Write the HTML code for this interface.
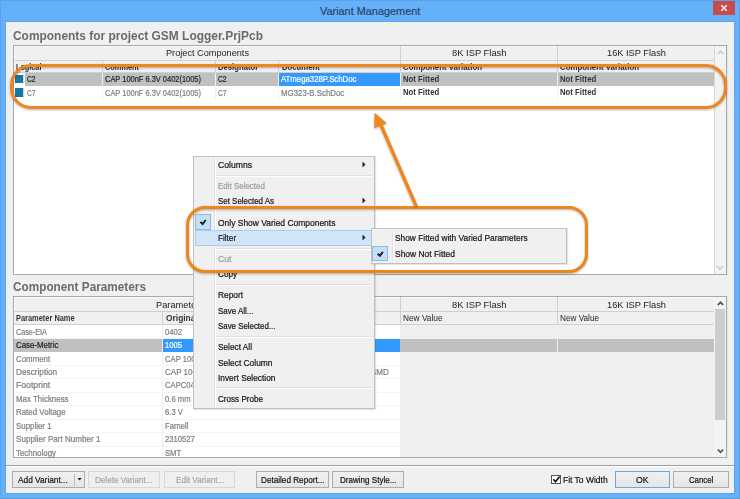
<!DOCTYPE html><html><head><meta charset="utf-8"><style>
*{margin:0;padding:0;box-sizing:border-box}
html,body{width:740px;height:499px;overflow:hidden;background:#64b1fa;font-family:"Liberation Sans",sans-serif}
div{position:absolute}
svg{position:absolute}
.t{white-space:nowrap;line-height:1;transform-origin:0 0}
</style></head><body><div style="left:0px;top:0px;width:740px;height:499px;background:#64b1fa"></div>
<div style="left:0px;top:0px;width:740px;height:1px;background:#5aa3e8"></div>
<div style="left:0px;top:0px;width:1px;height:499px;background:#5aa3e8"></div>
<div style="left:739px;top:0px;width:1px;height:499px;background:#5aa3e8"></div>
<div style="left:0px;top:498px;width:740px;height:1px;background:#5aa3e8"></div>
<div class="t" style="left:320px;top:5.87px;font-size:10.9px;color:#2b4466;font-weight:400;-webkit-text-stroke:0.2px #2b4466;">Variant Management</div>
<div style="left:713px;top:1px;width:22px;height:14px;background:#c94c4c"></div>
<svg style="left:713px;top:1px" width="22" height="14" viewBox="0 0 22 14"><path d="M8.3 4.3 L13.7 9.7 M13.7 4.3 L8.3 9.7" stroke="#fff" stroke-width="1.4"/></svg>
<div style="left:5px;top:21px;width:730px;height:473px;background:#5da6ee"></div>
<div style="left:6px;top:22px;width:728px;height:471px;background:#f0f0f0"></div>
<div class="t" style="left:13px;top:29.54px;font-size:12px;color:#6b6b6b;font-weight:700;transform:scaleX(0.9946);">Components for project GSM Logger.PrjPcb</div>
<div style="left:12.5px;top:44.5px;width:715px;height:230.5px;background:#e6e6e6"></div>
<div style="left:13px;top:45px;width:714px;height:229.5px;background:#fff;border:1px solid #a9a9a9"></div>
<div style="left:14px;top:46px;width:700px;height:15px;background:#f0f0f0;border-bottom:1px solid #d0d0d0;border-top:1px solid #fafafa;border-left:1px solid #fafafa"></div>
<div style="left:14px;top:61px;width:700px;height:12px;background:#f0f0f0;border-bottom:1px solid #d0d0d0"></div>
<div style="left:400px;top:46px;width:1px;height:27px;background:#d0d0d0"></div>
<div style="left:557px;top:46px;width:1px;height:27px;background:#d0d0d0"></div>
<div style="left:102px;top:61px;width:1px;height:12px;background:#d0d0d0"></div>
<div style="left:215.3px;top:61px;width:1px;height:12px;background:#d0d0d0"></div>
<div style="left:278.3px;top:61px;width:1px;height:12px;background:#d0d0d0"></div>
<div class="t" style="left:166px;top:48.58px;font-size:9px;color:#222;font-weight:400;transform:scaleX(1.0179);">Project Components</div>
<div class="t" style="left:451.5px;top:48.58px;font-size:9px;color:#222;font-weight:400;transform:scaleX(1.0408);">8K ISP Flash</div>
<div class="t" style="left:607px;top:48.58px;font-size:9px;color:#222;font-weight:400;transform:scaleX(1.0284);">16K ISP Flash</div>
<div class="t" style="left:15.9px;top:63.20px;font-size:8.5px;color:#333;font-weight:700;transform:scaleX(0.8536);">Logical</div>
<div class="t" style="left:104.9px;top:63.20px;font-size:8.5px;color:#333;font-weight:700;transform:scaleX(0.8674);">Comment</div>
<div class="t" style="left:218.2px;top:63.20px;font-size:8.5px;color:#333;font-weight:700;transform:scaleX(0.9054);">Designator</div>
<div class="t" style="left:281.5px;top:63.20px;font-size:8.5px;color:#333;font-weight:700;transform:scaleX(0.9071);">Document</div>
<div class="t" style="left:403px;top:63.20px;font-size:8.5px;color:#333;font-weight:700;transform:scaleX(0.9242);">Component Variation</div>
<div class="t" style="left:560px;top:63.20px;font-size:8.5px;color:#333;font-weight:700;transform:scaleX(0.9242);">Component Variation</div>
<div style="left:25px;top:73px;width:689px;height:13px;background:#c0c0c0"></div>
<div style="left:279px;top:73px;width:121px;height:13px;background:#3399ff"></div>
<div style="left:15.4px;top:74.6px;width:7.6px;height:8.8px;background:#1678a0"></div>
<div style="left:22.8px;top:74.6px;width:1.2px;height:8.8px;background:repeating-linear-gradient(#7fd8e8 0 1px,#e8f8fb 1px 2px)"></div>
<div style="left:14.6px;top:74.6px;width:0.8px;height:8.8px;background:repeating-linear-gradient(#7fd8e8 0 1px,#e8f8fb 1px 2px)"></div>
<div style="left:15.4px;top:88.1px;width:7.6px;height:8.8px;background:#1678a0"></div>
<div style="left:22.8px;top:88.1px;width:1.2px;height:8.8px;background:repeating-linear-gradient(#7fd8e8 0 1px,#e8f8fb 1px 2px)"></div>
<div style="left:14.6px;top:88.1px;width:0.8px;height:8.8px;background:repeating-linear-gradient(#7fd8e8 0 1px,#e8f8fb 1px 2px)"></div>
<div class="t" style="left:26.9px;top:75.30px;font-size:8.5px;color:#1e1e1e;font-weight:400;transform:scaleX(0.7915);-webkit-text-stroke:0.2px #1e1e1e;">C2</div>
<div class="t" style="left:26.9px;top:88.70px;font-size:8.5px;color:#7d7d7d;font-weight:400;transform:scaleX(0.7915);-webkit-text-stroke:0.2px #7d7d7d;">C7</div>
<div class="t" style="left:104.5px;top:75.30px;font-size:8.5px;color:#1e1e1e;font-weight:400;transform:scaleX(0.8769);-webkit-text-stroke:0.2px #1e1e1e;">CAP 100nF 6.3V 0402(1005)</div>
<div class="t" style="left:104.5px;top:88.70px;font-size:8.5px;color:#7d7d7d;font-weight:400;transform:scaleX(0.8769);-webkit-text-stroke:0.2px #7d7d7d;">CAP 100nF 6.3V 0402(1005)</div>
<div class="t" style="left:218.2px;top:75.30px;font-size:8.5px;color:#1e1e1e;font-weight:400;transform:scaleX(0.7915);-webkit-text-stroke:0.2px #1e1e1e;">C2</div>
<div class="t" style="left:218.2px;top:88.70px;font-size:8.5px;color:#7d7d7d;font-weight:400;transform:scaleX(0.7915);-webkit-text-stroke:0.2px #7d7d7d;">C7</div>
<div class="t" style="left:280.5px;top:75.30px;font-size:8.5px;color:#fff;font-weight:400;transform:scaleX(0.9153);-webkit-text-stroke:0.2px #fff;">ATmega328P.SchDoc</div>
<div class="t" style="left:280.5px;top:88.70px;font-size:8.5px;color:#7d7d7d;font-weight:400;transform:scaleX(0.9241);-webkit-text-stroke:0.2px #7d7d7d;">MG323-B.SchDoc</div>
<div class="t" style="left:403px;top:74.60px;font-size:8.5px;color:#333;font-weight:700;transform:scaleX(0.9128);">Not Fitted</div>
<div class="t" style="left:403px;top:88.00px;font-size:8.5px;color:#333;font-weight:700;transform:scaleX(0.9128);">Not Fitted</div>
<div class="t" style="left:559.6px;top:74.60px;font-size:8.5px;color:#333;font-weight:700;transform:scaleX(0.9128);">Not Fitted</div>
<div class="t" style="left:559.6px;top:88.00px;font-size:8.5px;color:#333;font-weight:700;transform:scaleX(0.9128);">Not Fitted</div>
<div style="left:102px;top:73px;width:1px;height:26.5px;background:#f2f2f2"></div>
<div style="left:215.3px;top:73px;width:1px;height:26.5px;background:#f2f2f2"></div>
<div style="left:278.3px;top:73px;width:1px;height:26.5px;background:#f2f2f2"></div>
<div style="left:400px;top:73px;width:1px;height:26.5px;background:#f2f2f2"></div>
<div style="left:557px;top:73px;width:1px;height:26.5px;background:#f2f2f2"></div>
<div style="left:714px;top:46px;width:12px;height:227.5px;background:#f3f3f3;border-left:1px solid #d8d8d8"></div>
<svg style="left:714px;top:46px" width="12" height="14"><path d="M3.8 8 L6.5 5.3 L9.2 8" stroke="#c4c4c4" stroke-width="1.4" fill="none"/></svg>
<svg style="left:714px;top:261px" width="12" height="12"><path d="M3 5 L6 8 L9 5" stroke="#c8c8c8" stroke-width="1.3" fill="none"/></svg>
<div class="t" style="left:13px;top:281.04px;font-size:12px;color:#6b6b6b;font-weight:700;transform:scaleX(0.9825);">Component Parameters</div>
<div style="left:12.5px;top:295.5px;width:715px;height:162.5px;background:#e6e6e6"></div>
<div style="left:13px;top:296px;width:714px;height:161.5px;background:#f0f0f0;border:1px solid #a9a9a9"></div>
<div style="left:14px;top:297px;width:700px;height:15px;background:#f0f0f0;border-bottom:1px solid #d0d0d0;border-top:1px solid #fafafa;border-left:1px solid #fafafa"></div>
<div style="left:14px;top:312px;width:700px;height:13px;background:#f0f0f0;border-bottom:1px solid #d0d0d0"></div>
<div style="left:400px;top:297px;width:1px;height:28px;background:#d0d0d0"></div>
<div style="left:557px;top:297px;width:1px;height:28px;background:#d0d0d0"></div>
<div style="left:162px;top:312px;width:1px;height:13px;background:#d0d0d0"></div>
<div class="t" style="left:155.7px;top:300.58px;font-size:9px;color:#222;font-weight:400;transform:scaleX(1.0319);">Parameters</div>
<div class="t" style="left:451.5px;top:300.58px;font-size:9px;color:#222;font-weight:400;transform:scaleX(1.0408);">8K ISP Flash</div>
<div class="t" style="left:607px;top:300.58px;font-size:9px;color:#222;font-weight:400;transform:scaleX(1.0284);">16K ISP Flash</div>
<div class="t" style="left:15.7px;top:314.10px;font-size:8.5px;color:#333;font-weight:700;transform:scaleX(0.8734);">Parameter Name</div>
<div class="t" style="left:165.5px;top:314.10px;font-size:8.5px;color:#333;font-weight:700;transform:scaleX(0.9879);">Original Value</div>
<div class="t" style="left:403px;top:314.10px;font-size:8.5px;color:#222;font-weight:400;transform:scaleX(0.9759);">New Value</div>
<div class="t" style="left:560px;top:314.10px;font-size:8.5px;color:#222;font-weight:400;transform:scaleX(0.9635);">New Value</div>
<div style="left:14px;top:325px;width:386px;height:131.5px;background:#fff"></div>
<div style="left:14px;top:337.95px;width:386px;height:1px;background:#f4f4f4"></div>
<div class="t" style="left:15.5px;top:327.60px;font-size:8.5px;color:#7d7d7d;font-weight:400;transform:scaleX(0.8495);-webkit-text-stroke:0.2px #7d7d7d;">Case-EIA</div>
<div class="t" style="left:164.9px;top:327.60px;font-size:8.5px;color:#7d7d7d;font-weight:400;transform:scaleX(0.9000);-webkit-text-stroke:0.2px #7d7d7d;">0402</div>
<div style="left:14px;top:338.84999999999997px;width:148px;height:12.85px;background:#c0c0c0"></div>
<div style="left:163px;top:338.84999999999997px;width:237px;height:12.85px;background:#3399ff"></div>
<div style="left:400px;top:338.84999999999997px;width:157px;height:12.85px;background:#c0c0c0"></div>
<div style="left:558px;top:338.84999999999997px;width:156px;height:12.85px;background:#c0c0c0"></div>
<div class="t" style="left:15.5px;top:341.05px;font-size:8.5px;color:#1e1e1e;font-weight:400;transform:scaleX(0.9255);-webkit-text-stroke:0.2px #1e1e1e;">Case-Metric</div>
<div class="t" style="left:164.9px;top:341.05px;font-size:8.5px;color:#fff;font-weight:400;transform:scaleX(0.9000);-webkit-text-stroke:0.2px #fff;">1005</div>
<div style="left:14px;top:364.84999999999997px;width:386px;height:1px;background:#f4f4f4"></div>
<div class="t" style="left:15.5px;top:354.50px;font-size:8.5px;color:#7d7d7d;font-weight:400;transform:scaleX(0.9282);-webkit-text-stroke:0.2px #7d7d7d;">Comment</div>
<div class="t" style="left:164.9px;top:354.50px;font-size:8.5px;color:#7d7d7d;font-weight:400;transform:scaleX(0.9000);-webkit-text-stroke:0.2px #7d7d7d;">CAP 100nF 6.3V 0402(1005)</div>
<div style="left:14px;top:378.3px;width:386px;height:1px;background:#f4f4f4"></div>
<div class="t" style="left:15.5px;top:367.95px;font-size:8.5px;color:#7d7d7d;font-weight:400;transform:scaleX(0.9690);-webkit-text-stroke:0.2px #7d7d7d;">Description</div>
<div class="t" style="left:164.9px;top:367.95px;font-size:8.5px;color:#7d7d7d;font-weight:400;transform:scaleX(0.9457);-webkit-text-stroke:0.2px #7d7d7d;">CAP 100nF 6.3V 0402 Ceramic Multilayer Capacitor X5R SMD</div>
<div style="left:14px;top:391.75px;width:386px;height:1px;background:#f4f4f4"></div>
<div class="t" style="left:15.5px;top:381.40px;font-size:8.5px;color:#7d7d7d;font-weight:400;transform:scaleX(1.0195);-webkit-text-stroke:0.2px #7d7d7d;">Footprint</div>
<div class="t" style="left:164.9px;top:381.40px;font-size:8.5px;color:#7d7d7d;font-weight:400;transform:scaleX(0.9000);-webkit-text-stroke:0.2px #7d7d7d;">CAPC0402(1005)</div>
<div style="left:14px;top:405.2px;width:386px;height:1px;background:#f4f4f4"></div>
<div class="t" style="left:15.5px;top:394.85px;font-size:8.5px;color:#7d7d7d;font-weight:400;transform:scaleX(0.9300);-webkit-text-stroke:0.2px #7d7d7d;">Max Thickness</div>
<div class="t" style="left:164.9px;top:394.85px;font-size:8.5px;color:#7d7d7d;font-weight:400;transform:scaleX(0.9000);-webkit-text-stroke:0.2px #7d7d7d;">0.6 mm</div>
<div style="left:14px;top:418.65px;width:386px;height:1px;background:#f4f4f4"></div>
<div class="t" style="left:15.5px;top:408.30px;font-size:8.5px;color:#7d7d7d;font-weight:400;transform:scaleX(0.9300);-webkit-text-stroke:0.2px #7d7d7d;">Rated Voltage</div>
<div class="t" style="left:164.9px;top:408.30px;font-size:8.5px;color:#7d7d7d;font-weight:400;transform:scaleX(0.9000);-webkit-text-stroke:0.2px #7d7d7d;">6.3 V</div>
<div style="left:14px;top:432.09999999999997px;width:386px;height:1px;background:#f4f4f4"></div>
<div class="t" style="left:15.5px;top:421.75px;font-size:8.5px;color:#7d7d7d;font-weight:400;transform:scaleX(0.9300);-webkit-text-stroke:0.2px #7d7d7d;">Supplier 1</div>
<div class="t" style="left:164.9px;top:421.75px;font-size:8.5px;color:#7d7d7d;font-weight:400;transform:scaleX(0.9000);-webkit-text-stroke:0.2px #7d7d7d;">Farnell</div>
<div style="left:14px;top:445.55px;width:386px;height:1px;background:#f4f4f4"></div>
<div class="t" style="left:15.5px;top:435.20px;font-size:8.5px;color:#7d7d7d;font-weight:400;transform:scaleX(0.9513);-webkit-text-stroke:0.2px #7d7d7d;">Supplier Part Number 1</div>
<div class="t" style="left:164.9px;top:435.20px;font-size:8.5px;color:#7d7d7d;font-weight:400;transform:scaleX(0.9000);-webkit-text-stroke:0.2px #7d7d7d;">2310527</div>
<div style="left:14px;top:459.0px;width:386px;height:1px;background:#f4f4f4"></div>
<div class="t" style="left:15.5px;top:448.65px;font-size:8.5px;color:#7d7d7d;font-weight:400;transform:scaleX(0.9300);-webkit-text-stroke:0.2px #7d7d7d;">Technology</div>
<div class="t" style="left:164.9px;top:448.65px;font-size:8.5px;color:#7d7d7d;font-weight:400;transform:scaleX(0.9000);-webkit-text-stroke:0.2px #7d7d7d;">SMT</div>
<div style="left:162px;top:325px;width:1px;height:131.5px;background:#eeeeee"></div>
<div style="left:714px;top:297px;width:12px;height:159.5px;background:#f3f3f3"></div>
<div style="left:715px;top:309px;width:10px;height:111px;background:#cdcdcd"></div>
<svg style="left:714px;top:297px" width="12" height="12"><path d="M3.8 8 L6.5 5.3 L9.2 8" stroke="#505050" stroke-width="1.7" fill="none"/></svg>
<svg style="left:714px;top:444px" width="12" height="12"><path d="M3.8 5.5 L6.5 8.3 L9.2 5.5" stroke="#505050" stroke-width="1.7" fill="none"/></svg>
<div style="left:6px;top:464.5px;width:728px;height:1px;background:#a0a0a0"></div>
<div style="left:6px;top:465.5px;width:728px;height:1px;background:#fff"></div>
<div style="left:12.2px;top:471.3px;width:72.8px;height:16.4px;background:linear-gradient(#f0f0f0,#e5e5e5);border:1px solid #adadad"></div>
<div class="t" style="left:17.9px;top:475.78px;font-size:9px;color:#111;font-weight:400;transform:scaleX(0.9227);-webkit-text-stroke:0.2px #111;">Add Variant...</div>
<div style="left:74px;top:473.5px;width:1px;height:12px;background:#bdbdbd"></div>
<svg style="left:75px;top:472px" width="10" height="14"><path d="M2.6 6 L6.6 6 L4.6 8.4 Z" fill="#111"/></svg>
<div style="left:87.8px;top:471.3px;width:72.00000000000001px;height:16.4px;background:#efefef;border:1px solid #d8d8d8"></div>
<div class="t" style="left:95.1px;top:475.78px;font-size:9px;color:#a6a6a6;font-weight:400;transform:scaleX(0.8987);-webkit-text-stroke:0.2px #a6a6a6;">Delete Variant...</div>
<div style="left:163.9px;top:471.3px;width:71.6px;height:16.4px;background:#efefef;border:1px solid #d8d8d8"></div>
<div class="t" style="left:175.55px;top:475.78px;font-size:9px;color:#a6a6a6;font-weight:400;transform:scaleX(0.9052);-webkit-text-stroke:0.2px #a6a6a6;">Edit Variant...</div>
<div style="left:256.2px;top:471.3px;width:72.69999999999999px;height:16.4px;background:linear-gradient(#f0f0f0,#e5e5e5);border:1px solid #adadad"></div>
<div class="t" style="left:260.8px;top:475.78px;font-size:9px;color:#111;font-weight:400;transform:scaleX(0.9067);-webkit-text-stroke:0.2px #111;">Detailed Report...</div>
<div style="left:332.2px;top:471.3px;width:72.30000000000001px;height:16.4px;background:linear-gradient(#f0f0f0,#e5e5e5);border:1px solid #adadad"></div>
<div class="t" style="left:340.15px;top:475.78px;font-size:9px;color:#111;font-weight:400;transform:scaleX(0.8949);-webkit-text-stroke:0.2px #111;">Drawing Style...</div>
<div style="left:614.6px;top:471.3px;width:55.10000000000002px;height:16.4px;background:linear-gradient(#f0f0f0,#e5e5e5);border:1px solid #68a8e8"></div>
<div class="t" style="left:635.9px;top:475.78px;font-size:9px;color:#111;font-weight:400;transform:scaleX(0.9613);-webkit-text-stroke:0.2px #111;">OK</div>
<div style="left:673.2px;top:471.3px;width:55.39999999999998px;height:16.4px;background:linear-gradient(#f0f0f0,#e5e5e5);border:1px solid #adadad"></div>
<div class="t" style="left:688.8px;top:475.78px;font-size:9px;color:#111;font-weight:400;transform:scaleX(0.8638);-webkit-text-stroke:0.2px #111;">Cancel</div>
<div style="left:551px;top:474.8px;width:9.5px;height:9px;background:#fff;border:1px solid #555"></div>
<svg style="left:551px;top:474px" width="11" height="11"><path d="M2.3 5.3 L4.5 7.8 L8.6 2.4" stroke="#111" stroke-width="1.6" fill="none"/></svg>
<div class="t" style="left:562.7px;top:475.78px;font-size:9px;color:#111;font-weight:400;transform:scaleX(0.9420);-webkit-text-stroke:0.2px #111;">Fit To Width</div>
<div style="left:10px;top:63.9px;width:717px;height:45px;border:3.4px solid #ee861d;border-radius:21px;filter:drop-shadow(0 1.5px 1px rgba(0,0,0,.3))"></div>
<div style="left:193px;top:155.5px;width:181.5px;height:253.0px;background:#f0f0f0;border:1px solid #c0c0c0;box-shadow:1px 1px 1px rgba(0,0,0,.1)"></div>
<div style="left:214px;top:156.5px;width:1px;height:251.0px;background:#e2e2e2"></div>
<div style="left:215px;top:156.5px;width:1px;height:251.0px;background:#fff"></div>
<div style="left:195px;top:230.3px;width:178px;height:15.6px;background:#d1e5f9;border:1px solid #a9cdef"></div>
<div style="left:195.2px;top:214.4px;width:16px;height:16px;background:#c6dff6;border:1px solid #8dbbe6"></div>
<svg style="left:195px;top:214px" width="16" height="16"><path d="M5.4 8 L7.7 10 L10.7 6" stroke="#1b2230" stroke-width="2" fill="none"/></svg>
<div style="left:216px;top:175px;width:156px;height:1px;background:#e0e0e0"></div>
<div style="left:216px;top:176px;width:156px;height:1px;background:#fff"></div>
<div style="left:216px;top:248.3px;width:156px;height:1px;background:#e0e0e0"></div>
<div style="left:216px;top:249.3px;width:156px;height:1px;background:#fff"></div>
<div style="left:216px;top:283.5px;width:156px;height:1px;background:#e0e0e0"></div>
<div style="left:216px;top:284.5px;width:156px;height:1px;background:#fff"></div>
<div style="left:216px;top:335.5px;width:156px;height:1px;background:#e0e0e0"></div>
<div style="left:216px;top:336.5px;width:156px;height:1px;background:#fff"></div>
<div style="left:216px;top:387px;width:156px;height:1px;background:#e0e0e0"></div>
<div style="left:216px;top:388px;width:156px;height:1px;background:#fff"></div>
<div class="t" style="left:218px;top:161.18px;font-size:9px;color:#111;font-weight:400;transform:scaleX(0.9574);-webkit-text-stroke:0.2px #111;">Columns</div>
<svg style="left:361px;top:161px" width="6" height="8"><path d="M1.5 0.5 L4.5 3.5 L1.5 6.5 Z" fill="#222"/></svg>
<div class="t" style="left:218px;top:182.18px;font-size:9px;color:#9a9a9a;font-weight:400;transform:scaleX(0.8843);-webkit-text-stroke:0.2px #9a9a9a;">Edit Selected</div>
<div class="t" style="left:218px;top:197.48px;font-size:9px;color:#111;font-weight:400;transform:scaleX(0.8813);-webkit-text-stroke:0.2px #111;">Set Selected As</div>
<svg style="left:361px;top:197.3px" width="6" height="8"><path d="M1.5 0.5 L4.5 3.5 L1.5 6.5 Z" fill="#222"/></svg>
<div class="t" style="left:218px;top:218.58px;font-size:9px;color:#111;font-weight:400;transform:scaleX(0.9399);-webkit-text-stroke:0.2px #111;">Only Show Varied Components</div>
<div class="t" style="left:218px;top:233.98px;font-size:9px;color:#111;font-weight:400;transform:scaleX(0.9050);-webkit-text-stroke:0.2px #111;">Filter</div>
<svg style="left:361px;top:233.8px" width="6" height="8"><path d="M1.5 0.5 L4.5 3.5 L1.5 6.5 Z" fill="#222"/></svg>
<div class="t" style="left:218px;top:254.68px;font-size:9px;color:#9a9a9a;font-weight:400;transform:scaleX(0.9568);-webkit-text-stroke:0.2px #9a9a9a;">Cut</div>
<div class="t" style="left:218px;top:270.48px;font-size:9px;color:#111;font-weight:400;transform:scaleX(0.9100);-webkit-text-stroke:0.2px #111;">Copy</div>
<div class="t" style="left:218px;top:291.48px;font-size:9px;color:#111;font-weight:400;transform:scaleX(0.9254);-webkit-text-stroke:0.2px #111;">Report</div>
<div class="t" style="left:218px;top:306.68px;font-size:9px;color:#111;font-weight:400;transform:scaleX(0.8845);-webkit-text-stroke:0.2px #111;">Save All...</div>
<div class="t" style="left:218px;top:322.18px;font-size:9px;color:#111;font-weight:400;transform:scaleX(0.8758);-webkit-text-stroke:0.2px #111;">Save Selected...</div>
<div class="t" style="left:218px;top:343.48px;font-size:9px;color:#111;font-weight:400;transform:scaleX(0.9184);-webkit-text-stroke:0.2px #111;">Select All</div>
<div class="t" style="left:218px;top:358.68px;font-size:9px;color:#111;font-weight:400;transform:scaleX(0.9295);-webkit-text-stroke:0.2px #111;">Select Column</div>
<div class="t" style="left:218px;top:374.18px;font-size:9px;color:#111;font-weight:400;transform:scaleX(0.9253);-webkit-text-stroke:0.2px #111;">Invert Selection</div>
<div class="t" style="left:218px;top:395.18px;font-size:9px;color:#111;font-weight:400;transform:scaleX(0.8996);-webkit-text-stroke:0.2px #111;">Cross Probe</div>
<div style="left:370.5px;top:228.4px;width:196.5px;height:35.2px;background:#f0f0f0;border:1px solid #c0c0c0;box-shadow:1px 1px 1px rgba(0,0,0,.1)"></div>
<div style="left:391.5px;top:229.4px;width:1px;height:33.2px;background:#e2e2e2"></div>
<div style="left:392.5px;top:229.4px;width:1px;height:33.2px;background:#fff"></div>
<div style="left:372.4px;top:246.4px;width:15.4px;height:15px;background:#c6dff6;border:1px solid #8dbbe6"></div>
<svg style="left:372px;top:246px" width="16" height="16"><path d="M5.6 7.8 L7.9 9.7 L10.9 5.8" stroke="#1b2230" stroke-width="2" fill="none"/></svg>
<div class="t" style="left:395.4px;top:234.18px;font-size:9px;color:#111;font-weight:400;transform:scaleX(0.9279);-webkit-text-stroke:0.2px #111;">Show Fitted with Varied Parameters</div>
<div class="t" style="left:395.4px;top:249.58px;font-size:9px;color:#111;font-weight:400;transform:scaleX(0.9371);-webkit-text-stroke:0.2px #111;">Show Not Fitted</div>
<div style="left:186px;top:206px;width:401.5px;height:66.8px;border:3.4px solid #ee861d;border-radius:19px;filter:drop-shadow(0 1.5px 1px rgba(0,0,0,.3))"></div>
<svg style="left:0;top:0;filter:drop-shadow(0 1.5px 1px rgba(0,0,0,.3))" width="740" height="499"><path d="M416.3 206.5 L380.5 124" stroke="#ee861d" stroke-width="3.3" fill="none"/><path d="M374.6 112.8 L386.8 123.2 L374.3 128.3 Z" fill="#ee861d"/></svg></body></html>
